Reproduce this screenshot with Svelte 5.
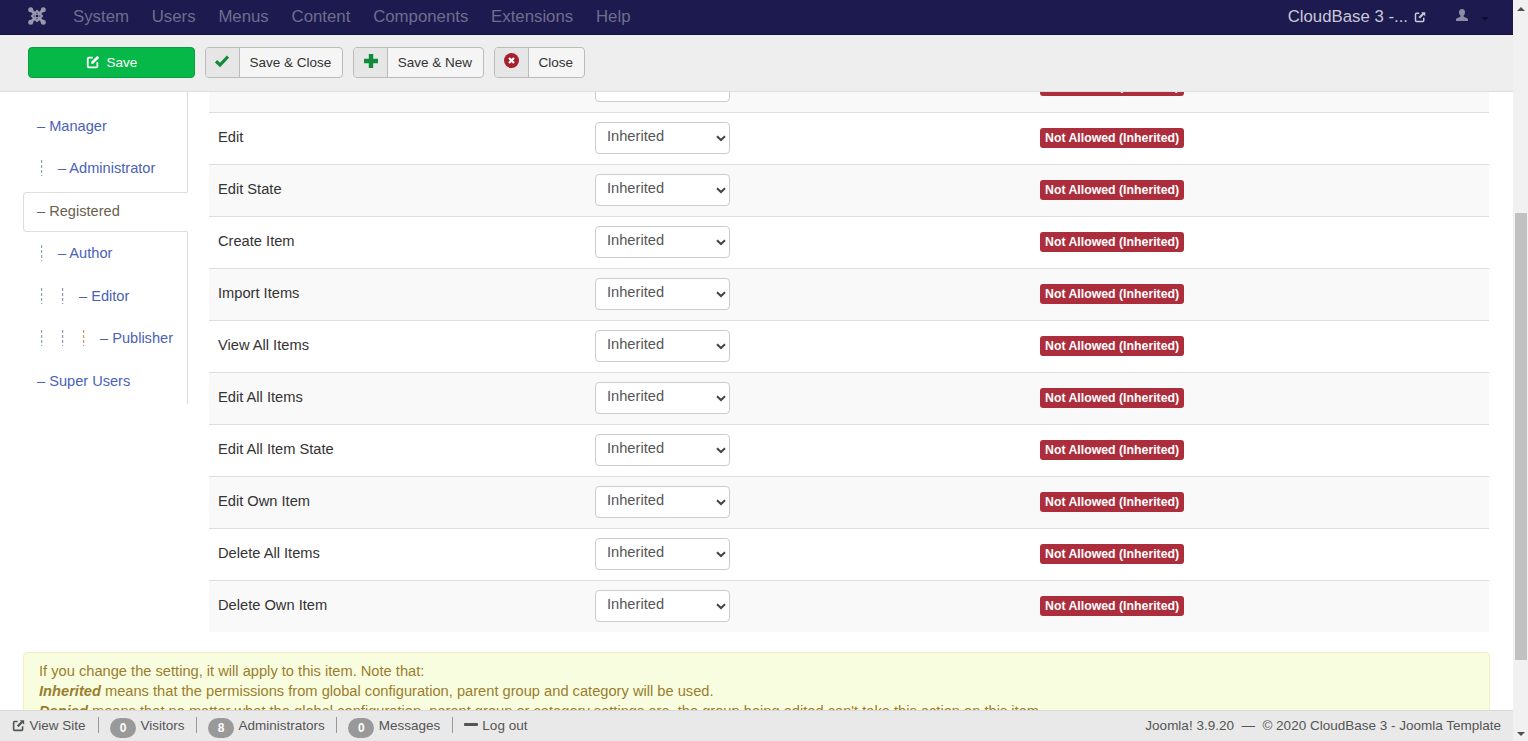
<script>
  const menu = ['System', 'Users', 'Menus', 'Content', 'Components', 'Extensions', 'Help'];
  const groups = [
    { name: 'Manager', depth: 0 },
    { name: 'Administrator', depth: 1 },
    { name: 'Registered', depth: 0, active: true },
    { name: 'Author', depth: 1 },
    { name: 'Editor', depth: 2 },
    { name: 'Publisher', depth: 3 },
    { name: 'Super Users', depth: 0 }
  ];
  const actions = [
    'Edit',
    'Edit State',
    'Create Item',
    'Import Items',
    'View All Items',
    'Edit All Items',
    'Edit All Item State',
    'Edit Own Item',
    'Delete All Items',
    'Delete Own Item'
  ];
  const stats = [
    { count: 0, label: 'Visitors' },
    { count: 8, label: 'Administrators' },
    { count: 0, label: 'Messages' }
  ];
</script>

{#snippet external(size)}
  <svg class="ext" width={size} height={size} viewBox="0 0 16 16" aria-hidden="true">
    <path d="M7 3H3.200C2.500 3 2 3.500 2 4.200v8.600c0 .7.5 1.200 1.200 1.200h8.600c.7 0 1.200-.5 1.200-1.200V9" fill="none" stroke="currentColor" stroke-width="2" />
    <path d="M9.500 1.500H15V7l-2-2-5 5-2-2 5-5z" fill="currentColor" />
  </svg>
{/snippet}

<div class="page">
  <div class="main">
    <nav class="navbar">
      <svg class="logo" width="18" height="18" viewBox="0 0 18 18" aria-hidden="true">
        <g fill="none" stroke="#9a97b0" stroke-linecap="round">
          <path d="M3 3 15 15M15 3 3 15" stroke-width="3" />
          <path d="M9 4 14 9 9 14 4 9z" stroke-width="2" />
        </g>
        <g fill="#9a97b0">
          <circle cx="2.700" cy="2.700" r="2.500" /><circle cx="15.300" cy="2.700" r="2.500" />
          <circle cx="2.700" cy="15.300" r="2.500" /><circle cx="15.300" cy="15.300" r="2.500" />
        </g>
        <circle cx="9" cy="9" r="1.300" fill="#1c1a4e" />
      </svg>
      <ul class="menu">
        {#each menu as item}
          <li>{item}</li>
        {/each}
      </ul>
      <div class="site">CloudBase 3 -...{@render external(12)}</div>
      <svg class="user" width="14" height="14" viewBox="0 0 14 14" aria-hidden="true">
        <path d="M7 0c2 0 3 1.400 3 3.200 0 1.500-.7 2.800-1.400 3.400-.3.8 0 1.300 1.200 1.700 1.800.6 3.200 1.100 3.200 2.400V12H1v-1.300c0-1.300 1.400-1.800 3.200-2.400 1.200-.4 1.500-.9 1.200-1.700C4.700 6 4 4.700 4 3.200 4 1.400 5 0 7 0z" fill="#8f8ba3" />
      </svg>
      <span class="caret"></span>
    </nav>

    <div class="toolbar">
      <button class="btn save">
        <svg width="14" height="14" viewBox="0 0 16 16" aria-hidden="true">
          <path d="M8 3H3.200C2.500 3 2 3.500 2 4.200v8.600c0 .7.5 1.200 1.200 1.200h8.600c.7 0 1.200-.5 1.200-1.200V8" fill="none" stroke="#fff" stroke-width="2" />
          <path d="M13 .8l2.200 2.200-7 7H6V7.800z" fill="#fff" />
        </svg>
        Save
      </button>
      <button class="btn">
        <span class="icon">
          <svg width="14" height="14" viewBox="0 0 14 14" aria-hidden="true"><path d="M1 7.200 5 11l8-8.500" fill="none" stroke="#118a3a" stroke-width="3.200" /></svg>
        </span>
        <span class="label">Save &amp; Close</span>
      </button>
      <button class="btn">
        <span class="icon">
          <svg width="14" height="14" viewBox="0 0 14 14" aria-hidden="true"><path d="M7 0v14M0 7h14" stroke="#118a3a" stroke-width="4.400" /></svg>
        </span>
        <span class="label">Save &amp; New</span>
      </button>
      <button class="btn">
        <span class="icon">
          <svg width="15" height="15" viewBox="0 0 15 15" aria-hidden="true">
            <circle cx="7.500" cy="7.500" r="7.500" fill="#a51f2d" />
            <path d="M5 5l5 5M10 5l-5 5" stroke="#fff" stroke-width="2.200" />
          </svg>
        </span>
        <span class="label">Close</span>
      </button>
    </div>

    <div class="content">
      <div class="scrolled">
        <aside class="sidebar">
          <ul class="groups">
            {#each groups as group}
              <li>
                <a href="#top" class:active={group.active}>
                  {#each Array(group.depth) as _, i}
                    <span class="guide g{i}"></span>
                  {/each}
                  <span>– {group.name}</span>
                </a>
              </li>
            {/each}
          </ul>
        </aside>
        <div class="panel">
          <div class="row clipped">
            <span class="select">Inherited</span>
            <span class="badge">Not Allowed (Inherited)</span>
          </div>
          {#each actions as action}
            <div class="row">
              <span class="action">{action}</span>
              <span class="select">
                Inherited
                <svg width="10" height="7" viewBox="0 0 10 7" aria-hidden="true"><path d="M1 1.200 5 5l4-3.800" fill="none" stroke="#444" stroke-width="2" /></svg>
              </span>
              <span class="badge">Not Allowed (Inherited)</span>
            </div>
          {/each}
        </div>
      </div>
      <div class="notice">
        If you change the setting, it will apply to this item. Note that:<br />
        <strong>Inherited</strong> means that the permissions from global configuration, parent group and category will be used.<br />
        <strong>Denied</strong> means that no matter what the global configuration, parent group or category settings are, the group being edited can't take this action on this item.
      </div>
    </div>

    <footer class="footer">
      <span class="item first">{@render external(13)} View Site</span>
      {#each stats as stat}
        <span class="item"><span class="count">{stat.count}</span>{stat.label}</span>
      {/each}
      <span class="item last"><span class="minus"></span>Log out</span>
      <span class="copy">Joomla! 3.9.20 &nbsp;—&nbsp; © 2020 CloudBase 3 - Joomla Template</span>
    </footer>
  </div>

  <div class="scrollbar">
    <span class="arrow up"></span>
    <div class="track"><div class="thumb"></div></div>
    <span class="arrow down"></span>
  </div>
</div>

<style>
  :global(body) {
    font-family: 'Liberation Sans', Arial, sans-serif;
    overflow: hidden;
  }

  .page {
    display: flex;
    height: 741px;
    overflow: hidden;
    background: #fff;
  }

  .main {
    flex: 1;
    min-width: 0;
    display: flex;
    flex-direction: column;
  }

  .navbar {
    flex: none;
    height: 35px;
    box-sizing: border-box;
    display: flex;
    align-items: center;
    padding: 0 24px 0 28px;
    background: #1c1a4e;
    border-bottom: 1px solid #15133c;
    color: #6f6d8f;
  }

  .logo {
    flex: none;
    margin-top: -3px;
  }

  .menu {
    display: flex;
    gap: 22.800px;
    list-style: none;
    margin: 0 0 0 27px;
    padding: 0;
    font-size: 16.800px;
  }

  .site {
    margin-left: auto;
    display: flex;
    align-items: center;
    gap: 6px;
    font-size: 16.800px;
    color: #c9c8d6;
  }

  .user {
    margin: -3px 0 0 29px;
  }

  .caret {
    margin: 4px 0 0 12px;
    border: 4px solid transparent;
    border-top-color: #0d0c2a;
    border-bottom: 0;
  }

  .toolbar {
    flex: none;
    height: 57px;
    box-sizing: border-box;
    display: flex;
    align-items: center;
    gap: 10px;
    padding: 0 0 2px 28px;
    background: #eeeeee;
    border-bottom: 1px solid #dddddd;
  }

  .btn {
    display: flex;
    align-items: stretch;
    height: 31px;
    padding: 0;
    box-sizing: border-box;
    background: #f5f5f5;
    border: 1px solid #bbbbbb;
    border-radius: 4px;
    font: 13.500px 'Liberation Sans', Arial, sans-serif;
    color: #333;
  }

  .btn.save {
    width: 167px;
    align-items: center;
    justify-content: center;
    gap: 7px;
    background: #06b847;
    border-color: #08a03f;
    color: #fff;
  }

  .icon {
    width: 32.500px;
    display: flex;
    align-items: center;
    justify-content: center;
    background: #e6e6e6;
    border-right: 1px solid #bbbbbb;
    border-radius: 3px 0 0 3px;
  }

  .icon svg {
    margin-top: -3px;
  }

  .label {
    display: flex;
    align-items: center;
    padding: 0 11px 0 10px;
  }

  .content {
    flex: 1;
    min-height: 0;
    overflow: hidden;
  }

  .scrolled {
    display: flex;
    align-items: flex-start;
    padding-left: 23px;
  }

  .sidebar {
    flex: none;
    width: 165px;
    box-sizing: border-box;
    height: 312px;
    border-right: 1px solid #dddddd;
  }

  .groups {
    display: grid;
    grid-auto-rows: 42.500px;
    align-items: center;
    list-style: none;
    margin: 12.500px 0 0;
    padding: 0;
    font-size: 14.600px;
  }

  .groups a {
    display: flex;
    align-items: center;
    height: 40px;
    box-sizing: border-box;
    padding-left: 13px;
    margin-right: -1px;
    color: #4a62b8;
    text-decoration: none;
    border: 1px solid transparent;
  }

  .groups a.active {
    position: relative;
    margin-top: 2px;
    padding-bottom: 2px;
    background: #fff;
    color: #6b5f4d;
    border-color: #dddddd;
    border-right-color: #fff;
    border-radius: 4px 0 0 4px;
  }

  .guide {
    --tone: #7fb0b8;
    flex: none;
    width: 2px;
    height: 16px;
    margin: 0 15px 0 4px;
    background:
      repeating-linear-gradient(transparent 0 3px, #fff 3px 5px),
      linear-gradient(to right, var(--tone) 50%, #f3e8da 50%);
  }

  .guide.g1 {
    --tone: #8f90d0;
  }

  .guide.g2 {
    --tone: #c09a70;
  }

  .panel {
    flex: none;
    width: 1280px;
    margin-left: 21px;
    font-size: 14.670px;
    color: #333;
  }

  .row {
    display: flex;
    align-items: center;
    height: 52px;
    box-sizing: border-box;
    padding: 0 0 1px 9px;
    border-top: 1px solid #dddddd;
  }

  .row:nth-child(odd) {
    background: #f9f9f9;
  }

  .row.clipped {
    height: 20px;
    overflow: hidden;
    border-top: 0;
    position: relative;
  }

  .row.clipped .select {
    position: absolute;
    left: 386px;
    bottom: 10px;
  }

  .row.clipped .badge {
    position: absolute;
    left: 831px;
    bottom: 16px;
    margin: 0;
  }

  .action {
    width: 377px;
    margin-bottom: 2px;
  }

  .select {
    flex: none;
    width: 135px;
    height: 32px;
    box-sizing: border-box;
    display: flex;
    align-items: center;
    justify-content: space-between;
    padding: 0 3px 4px 11px;
    background: #fff;
    border: 1px solid #cccccc;
    border-radius: 4px;
    color: #555;
  }

  .select svg {
    margin-top: 5px;
  }

  .badge {
    flex: none;
    margin-left: 310px;
    padding: 0 5px;
    height: 20px;
    line-height: 20px;
    white-space: nowrap;
    background: #ac2e3d;
    border-radius: 3px;
    color: #fff;
    font-size: 12.300px;
    font-weight: bold;
  }

  .notice {
    width: 1467px;
    height: 100px;
    box-sizing: border-box;
    margin: 20px 0 0 23px;
    padding: 8px 15px;
    background: #f9fde0;
    border: 1px solid #f4edc4;
    border-radius: 4px;
    color: #9a7d2e;
    font-size: 14.670px;
    line-height: 20px;
  }

  .notice strong {
    font-style: italic;
  }

  .footer {
    flex: none;
    height: 31px;
    box-sizing: border-box;
    display: flex;
    align-items: center;
    padding: 0 12px 2px 12px;
    background: #e9e9e9;
    border-top: 1px solid #d9d9d9;
    font-size: 13.500px;
    color: #555;
  }

  .item {
    display: flex;
    align-items: center;
    gap: 4.500px;
    height: 16px;
    padding-right: 11.500px;
    margin-right: 11px;
    border-right: 1px solid #999;
  }

  .item.first {
    padding-right: 12.500px;
  }

  .item.last {
    border-right: 0;
  }

  .count {
    min-width: 26px;
    box-sizing: border-box;
    text-align: center;
    line-height: 20px;
    margin: 5px 0 0;
    background: #999;
    border-radius: 10px;
    color: #fff;
    font-size: 12px;
    font-weight: bold;
  }

  .minus {
    width: 14px;
    height: 3px;
    margin-top: -2px;
    background: #555;
    border-radius: 1px;
  }

  .copy {
    margin-left: auto;
  }

  .scrollbar {
    flex: none;
    width: 15px;
    display: flex;
    flex-direction: column;
    align-items: center;
    background: #f1f1f1;
  }

  .arrow {
    flex: none;
    margin: 7px 0;
    border: 4px solid transparent;
  }

  .arrow.up {
    border-bottom-color: #505050;
    border-top: 0;
  }

  .arrow.down {
    border-top-color: #505050;
    border-bottom: 0;
    margin: 7px 0 5px;
  }

  .track {
    flex: 1;
    width: 100%;
  }

  .thumb {
    width: 12px;
    height: 447px;
    margin: 195px auto 0;
    background: #c1c1c1;
  }
</style>
